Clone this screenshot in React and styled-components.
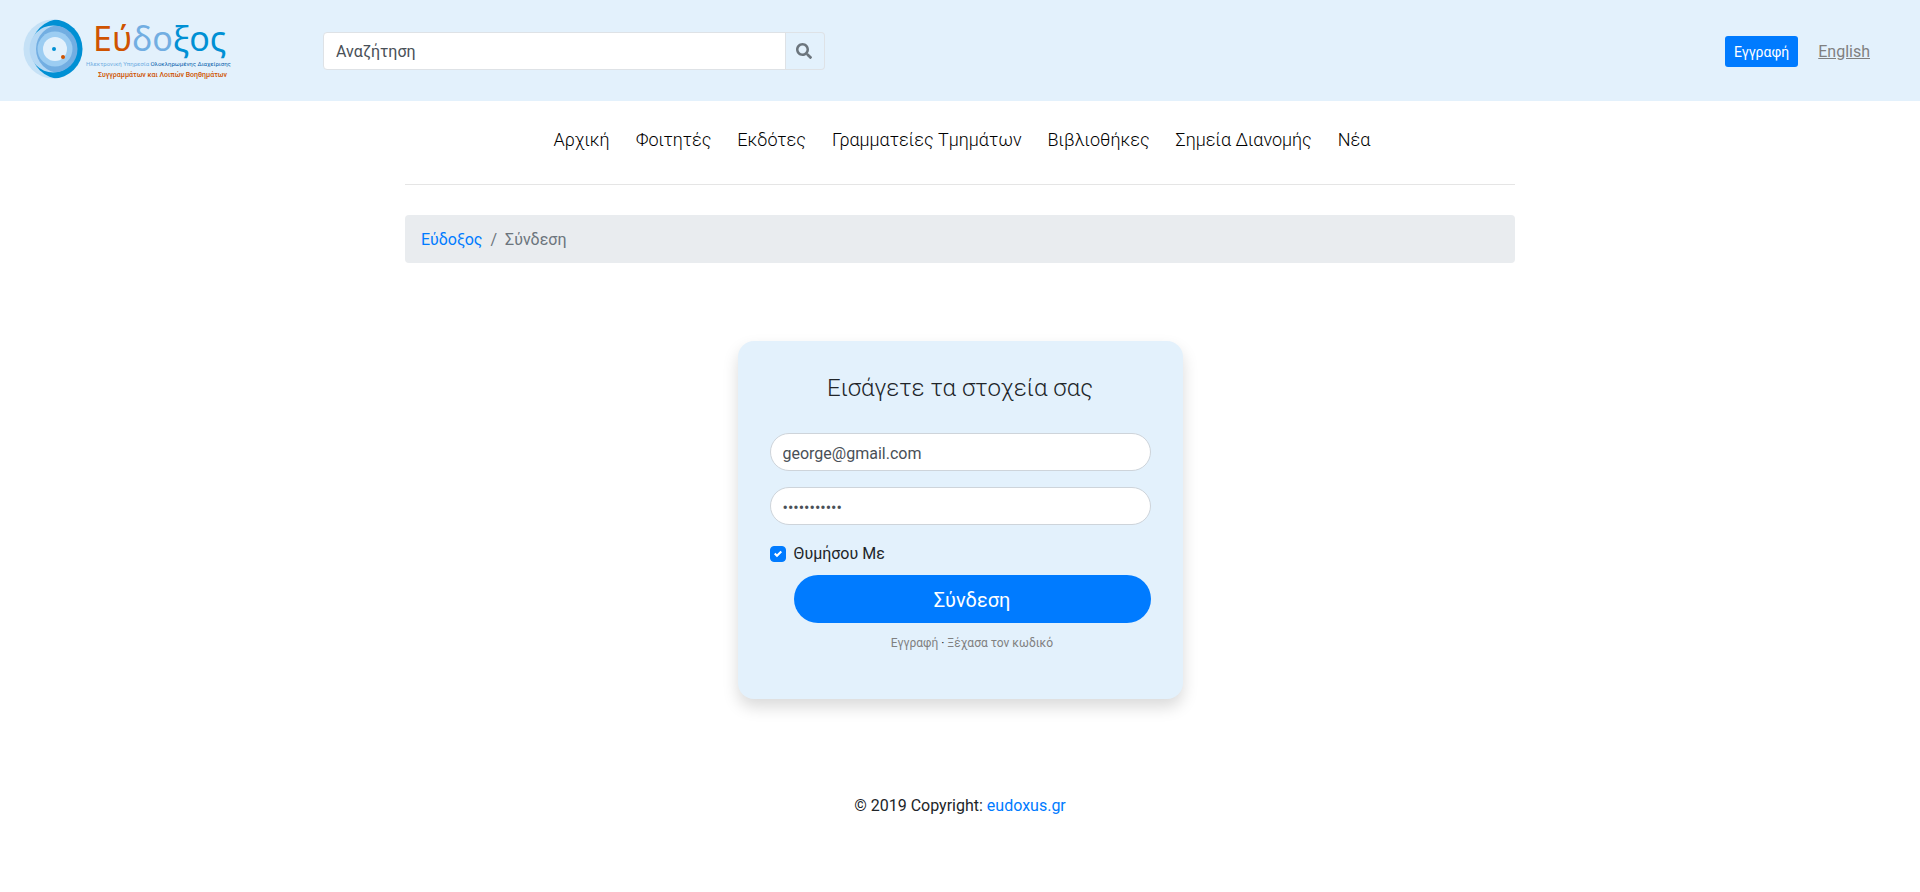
import React from "react";
import styled, { createGlobalStyle } from "styled-components";
import { FaSearch } from "react-icons/fa";

const GlobalStyle = createGlobalStyle`
  *, *::before, *::after { box-sizing: border-box; }
  body {
    margin: 0;
    background: #fff;
    color: #212529;
    font-family: Roboto, "Liberation Sans", sans-serif;
    font-size: 16px;
    line-height: 24px;
  }
  input, button { font: inherit; margin: 0; }
  a { color: #007bff; text-decoration: none; }
`;

const Header = styled.header`
  display: flex;
  align-items: center;
  min-height: 101px;
  padding: 0 50px 0 20px;
  background: #e3f1fc;
`;

const Brand = styled.a`
  display: block;
  flex: none;
  width: 303px;
`;

const LogoImage = styled.svg`
  display: block;
  width: 220px;
  height: 84px;
`;

const SearchForm = styled.form`
  display: flex;
  flex: 0 1 502px;
  min-width: 0;
`;

const SearchInput = styled.input`
  flex: 1;
  min-width: 0;
  height: 38px;
  padding: 7px 12px 5px;
  border: 1px solid #dee2e6;
  border-radius: 4px 0 0 4px;
  background: #fff;
  color: #495057;
  &::placeholder { color: #495057; opacity: 1; }
`;

const SearchButton = styled.button`
  display: flex;
  align-items: center;
  justify-content: center;
  width: 40px;
  height: 38px;
  margin-left: -1px;
  padding: 0 2px 0 0;
  border: 1px solid #dee2e6;
  border-left: 0;
  border-radius: 0 4px 4px 0;
  background: transparent;
  color: #6c757d;
`;

const HeaderActions = styled.div`
  display: flex;
  align-items: center;
  gap: 20px;
  margin-left: auto;
  padding-top: 2px;
`;

const SignUpButton = styled.button`
  height: 31px;
  padding: 0 9px;
  border: 0;
  border-radius: 3px;
  background: #007bff;
  color: #fff;
  font-size: 14px;
`;

const LanguageLink = styled.a`
  color: #808080;
  text-decoration: underline;
`;

const Container = styled.div`
  width: 100%;
  max-width: 1140px;
  margin: 0 auto;
  padding: 0 15px;
`;

const Nav = styled.nav`
  display: flex;
  flex-wrap: wrap;
  justify-content: center;
  gap: 8px 26px;
  padding: 27px 0 32px 4px;
  border-bottom: 1px solid #e5e5e5;
`;

const NavLink = styled.a`
  color: #000;
  font-size: 18px;
  font-weight: 300;
`;

const Breadcrumb = styled.ol`
  display: flex;
  margin: 30px 0 0;
  padding: 13px 16px 11px;
  border-radius: 4px;
  background: #e9ecef;
  list-style: none;
`;

const Crumb = styled.li`
  color: #6c757d;
  & + &::before {
    content: "/";
    padding: 0 8px;
  }
`;

const Card = styled.main`
  width: 100%;
  max-width: 445px;
  margin: 78px auto 0;
  padding: 33px 32px 44px;
  border-radius: 16px;
  background: #e3f1fc;
  box-shadow: 0 8px 16px rgba(0, 0, 0, 0.15);
`;

const CardTitle = styled.h1`
  margin: 0 0 30px;
  font-size: 24px;
  font-weight: 300;
  line-height: 29px;
  text-align: center;
`;

const Field = styled.input`
  display: block;
  width: 100%;
  height: 38px;
  margin-bottom: 16px;
  padding: 7px 12px 5px;
  border: 1px solid #ced4da;
  border-radius: 19px;
  background: #fff;
  color: #495057;
`;

const Remember = styled.label`
  display: flex;
  align-items: center;
  gap: 8px;
  padding: 1px 0 9px;
`;

const CheckBox = styled.input`
  appearance: none;
  flex: none;
  width: 16px;
  height: 16px;
  border: 1px solid #adb5bd;
  border-radius: 4px;
  background: #fff center / 8px 8px no-repeat;
  &:checked {
    border-color: #007bff;
    background-color: #007bff;
    background-image: url("data:image/svg+xml,%3csvg xmlns='http://www.w3.org/2000/svg' viewBox='0 0 8 8'%3e%3cpath fill='%23fff' d='M6.564.75l-3.59 3.612-1.538-1.55L0 4.26 2.974 7.25 8 2.193z'/%3e%3c/svg%3e");
  }
`;

const FormEnd = styled.div`
  padding-left: 24px;
  text-align: center;
`;

const SubmitButton = styled.button`
  display: block;
  width: 100%;
  height: 48px;
  padding: 1px 0 0;
  border: 0;
  border-radius: 24px;
  background: #007bff;
  color: #fff;
  font-size: 20px;
`;

const HelpLinks = styled.p`
  margin: 8px 0 0;
  font-size: 12px;
  a { color: #808080; }
`;

const Footer = styled.footer`
  padding: 95px 0 16px;
  text-align: center;
`;

const HiddenLabel = styled.label`
  position: absolute;
  width: 1px;
  height: 1px;
  overflow: hidden;
  clip-path: inset(50%);
`;

const navItems = [
  "Αρχική",
  "Φοιτητές",
  "Εκδότες",
  "Γραμματείες Τμημάτων",
  "Βιβλιοθήκες",
  "Σημεία Διανομής",
  "Νέα",
];

function Logo() {
  return (
    <LogoImage viewBox="20 8 220 84" role="img" aria-label="Εύδοξος">
      <defs>
        <clipPath id="outer-disc"><circle cx="53" cy="48" r="29.5" /></clipPath>
        <clipPath id="middle-disc"><circle cx="54" cy="48" r="23.5" /></clipPath>
      </defs>
      <circle cx="53" cy="48" r="29.5" fill="#c5e1f6" />
      <circle cx="61" cy="48" r="30" fill="#0090d4" clipPath="url(#outer-disc)" />
      <circle cx="53" cy="48" r="23.5" fill="#b5d8f4" />
      <circle cx="60" cy="48" r="24" fill="#72aee2" clipPath="url(#middle-disc)" />
      <circle cx="55" cy="48" r="17.5" fill="#9ccdf2" />
      <circle cx="55" cy="48" r="12" fill="#e3f1fc" />
      <circle cx="54" cy="48" r="2" fill="#0090d4" />
      <circle cx="63" cy="56" r="2" fill="#cf5300" />
      <text x="93" y="50" fontSize="34" fontFamily="'Noto Sans', 'Open Sans', sans-serif">
        <tspan fill="#cf5300">Εύ</tspan>
        <tspan fill="#72aee2">δο</tspan>
        <tspan fill="#0090d4">ξος</tspan>
      </text>
      <g fontFamily="Roboto, 'Liberation Sans', sans-serif">
        <text x="86" y="65" fontSize="6">
          <tspan fill="#72aee2">Ηλεκτρονική Υπηρεσία </tspan>
          <tspan fill="#0a62ac">Ολοκληρωμένης Διαχείρισης</tspan>
        </text>
        <text x="98" y="76" fontSize="7" fill="#cf5300" fontWeight="500">
          Συγγραμμάτων και Λοιπών Βοηθημάτων
        </text>
      </g>
    </LogoImage>
  );
}

export default function App() {
  return (
    <>
      <GlobalStyle />
      <Header>
        <Brand href="#"><Logo /></Brand>
        <SearchForm role="search">
          <HiddenLabel htmlFor="search">Αναζήτηση</HiddenLabel>
          <SearchInput id="search" type="text" placeholder="Αναζήτηση" />
          <SearchButton type="button" aria-label="Αναζήτηση"><FaSearch size={16} /></SearchButton>
        </SearchForm>
        <HeaderActions>
          <SignUpButton type="button">Εγγραφή</SignUpButton>
          <LanguageLink href="#">English</LanguageLink>
        </HeaderActions>
      </Header>
      <Container>
        <Nav>
          {navItems.map((item) => (
            <NavLink href="#" key={item}>{item}</NavLink>
          ))}
        </Nav>
        <Breadcrumb>
          <Crumb><a href="#">Εύδοξος</a></Crumb>
          <Crumb aria-current="page">Σύνδεση</Crumb>
        </Breadcrumb>
        <Card>
          <CardTitle>Εισάγετε τα στοχεία σας</CardTitle>
          <form>
            <HiddenLabel htmlFor="email">Email</HiddenLabel>
            <Field id="email" type="email" defaultValue="george@gmail.com" />
            <HiddenLabel htmlFor="password">Password</HiddenLabel>
            <Field id="password" type="password" defaultValue="george12345" />
            <Remember>
              <CheckBox type="checkbox" defaultChecked />
              Θυμήσου Με
            </Remember>
            <FormEnd>
              <SubmitButton type="button">Σύνδεση</SubmitButton>
              <HelpLinks>
                <a href="#">Εγγραφή</a> · <a href="#">Ξέχασα τον κωδικό</a>
              </HelpLinks>
            </FormEnd>
          </form>
        </Card>
      </Container>
      <Footer>
        © 2019 Copyright: <a href="#">eudoxus.gr</a>
      </Footer>
    </>
  );
}
